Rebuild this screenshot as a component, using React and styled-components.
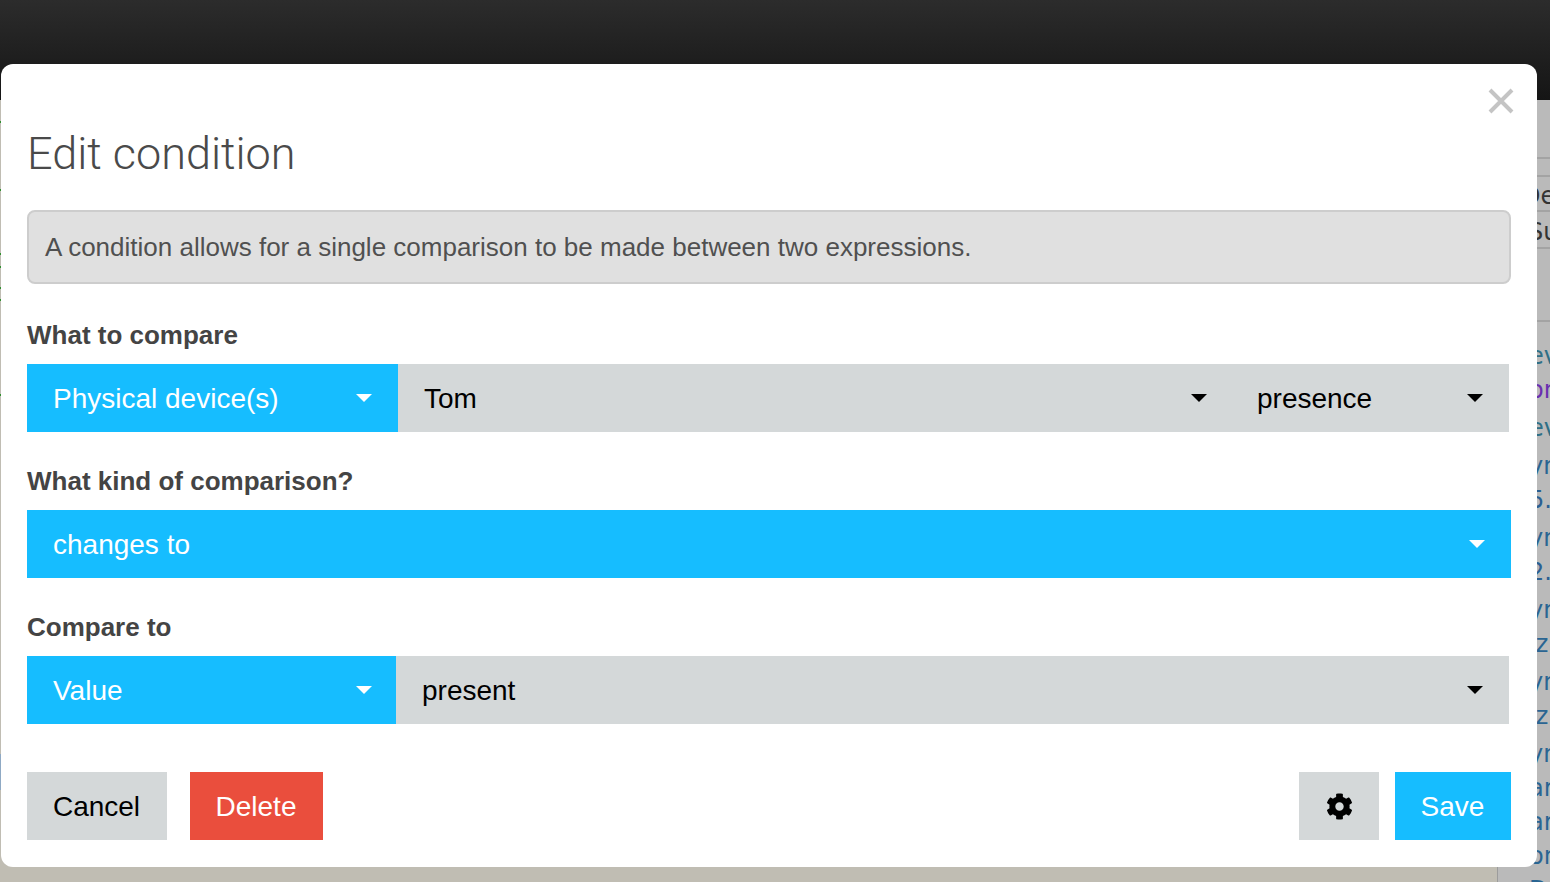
import styled, { createGlobalStyle } from "styled-components";
import { FaCog } from "react-icons/fa";

const GlobalStyle = createGlobalStyle`
  html, body {
    margin: 0;
    height: 100%;
    overflow: hidden;
    background: #c0bdb3;
  }
`;

const sideRows = [
  { text: "ev", color: "#2e6f86", gap: 8 },
  { text: "on", color: "#6a2fb0", gap: 0 },
  { text: "ev", color: "#2e6f86", gap: 4 },
  { text: "yn", color: "#2a6592", gap: 4 },
  { text: "5.", color: "#2a5f92", gap: 0 },
  { text: "yn", color: "#2a6592", gap: 4 },
  { text: "2.", color: "#2a5f92", gap: 0 },
  { text: "yn", color: "#2a6592", gap: 4 },
  { text: "iz", color: "#2a6592", gap: 0 },
  { text: "yn", color: "#2a6592", gap: 4 },
  { text: "iz", color: "#2a6592", gap: 0 },
  { text: "yn", color: "#2a6592", gap: 4 },
  { text: "ar", color: "#2a6592", gap: 0 },
  { text: "ar", color: "#2a6592", gap: 0 },
  { text: "on", color: "#2a6592", gap: 0 },
  { text: "Da", color: "#2a6592", gap: 0 },
];

const ticks = [122, 190, 254, 267, 288, 300, 395];

const App = () => {
  return (
    <>
      <GlobalStyle />
      <Page>
        <TopBar />
        <Backdrop>
          <LeftGutter>
            {ticks.map((y, i) => (
              <Tick key={y} $gap={y - (i ? ticks[i - 1] + 1 : 100)} />
            ))}
            <GutterBlock />
          </LeftGutter>
          <SidePane>
            <HeadRows>
              <HeadRow $height={18} />
              <HeadRow $height={35} $inset={24}>De</HeadRow>
              <HeadRow $height={37} $inset={30}>Su</HeadRow>
            </HeadRows>
            {sideRows.map(({ text, color, gap }, i) => (
              <SideText key={i} $color={color} $gap={gap}>
                {text}
              </SideText>
            ))}
          </SidePane>
        </Backdrop>
      </Page>

      <Modal>
        <Close aria-label="Close">
          <svg width="26" height="26" viewBox="0 0 26 26">
            <path d="M2 2 L24 24 M24 2 L2 24" stroke="#c4c4c4" strokeWidth="4" />
          </svg>
        </Close>
        <Title>Edit condition</Title>
        <Alert>A condition allows for a single comparison to be made between two expressions.</Alert>

        <Label>What to compare</Label>
        <Row $width={1482}>
          <Select $primary $width={371}>
            <SelectText>Physical device(s)</SelectText>
            <Caret $primary />
          </Select>
          <Select $grow $end={24}>
            <SelectText>Tom</SelectText>
            <Caret />
          </Select>
          <Select $width={278}>
            <SelectText>presence</SelectText>
            <Caret />
          </Select>
        </Row>

        <Label>What kind of comparison?</Label>
        <Row $width={1484}>
          <Select $primary $grow>
            <SelectText>changes to</SelectText>
            <Caret $primary />
          </Select>
        </Row>

        <Label>Compare to</Label>
        <Row $width={1482}>
          <Select $primary $width={369} $end={24}>
            <SelectText>Value</SelectText>
            <Caret $primary />
          </Select>
          <Select $grow>
            <SelectText>present</SelectText>
            <Caret />
          </Select>
        </Row>

        <Footer>
          <ButtonGroup $gap={23}>
            <Button $width={140}>Cancel</Button>
            <Button $width={133} $bg="#ea4e3d" $fg="#fff">
              Delete
            </Button>
          </ButtonGroup>
          <ButtonGroup $gap={16}>
            <Button $width={80} $flush aria-label="Settings">
              <FaCog size={27} />
            </Button>
            <Button $width={116} $bg="#16bdff" $fg="#fff">
              Save
            </Button>
          </ButtonGroup>
        </Footer>
      </Modal>
    </>
  );
};

export default App;

const Page = styled.div`
  height: 882px;
  display: flex;
  flex-direction: column;
`;

const TopBar = styled.div`
  height: 100px;
  flex: none;
  background: linear-gradient(#2c2c2c, #151515);
`;

const Backdrop = styled.div`
  flex: 1;
  display: flex;
  justify-content: space-between;
  background: #c0bdb3;
`;

const LeftGutter = styled.div`
  width: 2px;
  display: flex;
  flex-direction: column;
`;

const Tick = styled.div`
  height: 2px;
  flex: none;
  margin-top: ${(p) => p.$gap - 1}px;
  background: #2f8f2f;
`;

const GutterBlock = styled.div`
  height: 36px;
  margin-top: 358px;
  background: #8fa9c4;
`;

const SidePane = styled.div`
  width: 52px;
  background: #bababa;
  border-left: 1px solid #9c9c9c;
  overflow: hidden;
  font-family: "DejaVu Sans", sans-serif;
  font-size: 24px;
`;

const HeadRows = styled.div`
  padding-top: 57px;
  height: 163px;
  margin-bottom: 17px;
  border-bottom: 2px solid #a3a3a3;
`;

const HeadRow = styled.div`
  box-sizing: border-box;
  height: ${(p) => p.$height}px;
  line-height: ${(p) => p.$height + 3}px;
  padding-left: ${(p) => p.$inset ?? 0}px;
  color: #333;
  border-top: 2px solid #a3a3a3;
  &:last-child {
    box-sizing: content-box;
    height: ${(p) => p.$height - 2}px;
    border-bottom: 2px solid #a3a3a3;
  }
`;

const SideText = styled.div`
  height: 34px;
  line-height: 34px;
  margin-top: ${(p) => p.$gap}px;
  padding-left: 31px;
  white-space: nowrap;
  color: ${(p) => p.$color};
`;

const Modal = styled.div`
  position: absolute;
  top: 64px;
  left: 1px;
  width: 1536px;
  height: 803px;
  box-sizing: border-box;
  padding: 63px 26px 0;
  background: #fff;
  border-radius: 12px;
  font-family: "Liberation Sans", Arial, sans-serif;
`;

const Close = styled.button`
  position: absolute;
  top: 24px;
  right: 23px;
  width: 26px;
  height: 26px;
  padding: 0;
  border: 0;
  background: none;
  display: block;
`;

const Title = styled.h2`
  margin: 0;
  height: 52px;
  font-family: Roboto, "Liberation Sans", Arial, sans-serif;
  font-size: 45px;
  line-height: 54px;
  font-weight: 300;
  color: #4a4a4a;
`;

const Alert = styled.div`
  box-sizing: border-box;
  height: 74px;
  width: 1484px;
  margin-top: 31px;
  padding: 0 16px;
  display: flex;
  align-items: center;
  background: #e0e0e0;
  border: 2px solid #cdcdcd;
  border-radius: 8px;
  font-size: 26px;
  color: #505050;
`;

const Label = styled.div`
  height: 30px;
  margin-top: 36px;
  margin-bottom: 14px;
  font-size: 26px;
  line-height: 30px;
  font-weight: 700;
  color: #444;

  & + div + & {
    margin-top: 34px;
  }
`;

const Row = styled.div`
  display: flex;
  height: 68px;
  width: ${(p) => p.$width}px;
`;

const Select = styled.div`
  box-sizing: border-box;
  height: 68px;
  display: flex;
  align-items: center;
  justify-content: space-between;
  padding: 0 ${(p) => p.$end ?? 26}px 0 26px;
  flex: ${(p) => (p.$grow ? "1" : "none")};
  width: ${(p) => (p.$width ? `${p.$width}px` : "auto")};
  background: ${(p) => (p.$primary ? "#16bdff" : "#d4d8d9")};
  color: ${(p) => (p.$primary ? "#fff" : "#000")};
  font-size: 28px;
`;

const SelectText = styled.span`
  padding-top: 2px;
`;

const Caret = styled.span`
  width: 0;
  height: 0;
  border-left: 8px solid transparent;
  border-right: 8px solid transparent;
  border-top: 8px solid ${(p) => (p.$primary ? "#fff" : "#000")};
`;

const Footer = styled.div`
  display: flex;
  justify-content: space-between;
  width: 1484px;
  margin-top: 48px;
`;

const ButtonGroup = styled.div`
  display: flex;
  gap: ${(p) => p.$gap}px;
`;

const Button = styled.button`
  height: 68px;
  width: ${(p) => p.$width}px;
  padding: ${(p) => (p.$flush ? "0" : "2px 1px 0 0")};
  border: 0;
  display: flex;
  align-items: center;
  justify-content: center;
  background: ${(p) => p.$bg || "#d4d8d9"};
  color: ${(p) => p.$fg || "#000"};
  font-family: "Liberation Sans", Arial, sans-serif;
  font-size: 28px;
`;
